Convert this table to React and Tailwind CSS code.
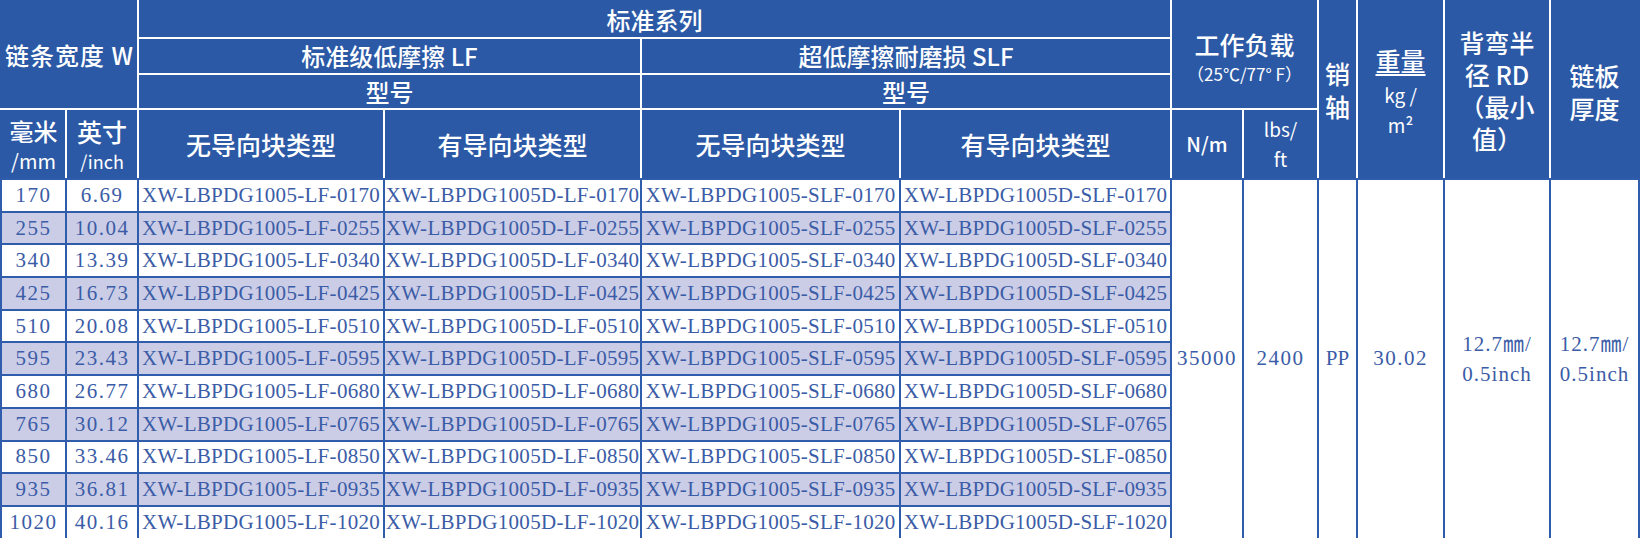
const widths = [
  ["170", "6.69"],
  ["255", "10.04"],
  ["340", "13.39"],
  ["425", "16.73"],
  ["510", "20.08"],
  ["595", "23.43"],
  ["680", "26.77"],
  ["765", "30.12"],
  ["850", "33.46"],
  ["935", "36.81"],
  ["1020", "40.16"],
];

const code = (mm) => mm.padStart(4, "0");

const head = "bg-[#2b59a6] text-white border-2 border-white text-center align-middle font-medium p-0";
const body = "border-2 border-[#2f5cab] text-center align-middle p-0 whitespace-nowrap";

const App = () => {
  return (
    <div className="w-[1641px] h-[538px] bg-white overflow-hidden">
      <table
        className="table-fixed border-collapse w-[1638px] text-[#3b5ca6]"
        style={{ fontFamily: '"Noto Sans CJK SC", sans-serif' }}
      >
        <colgroup>
          <col className="w-[65px]" />
          <col className="w-[72px]" />
          <col className="w-[246px]" />
          <col className="w-[257px]" />
          <col className="w-[259px]" />
          <col className="w-[271px]" />
          <col className="w-[72px]" />
          <col className="w-[75px]" />
          <col className="w-[39px]" />
          <col className="w-[87px]" />
          <col className="w-[106px]" />
          <col className="w-[89px]" />
        </colgroup>
        <thead className="text-[24px] leading-none">
          <tr className="h-[37px]">
            <th colSpan={2} rowSpan={3} className={`${head} border-t-[#2b59a6] border-l-[#2b59a6] tracking-[1px]`}>
              链条宽度 W
            </th>
            <th colSpan={4} className={`${head} border-t-[#2b59a6]`}>标准系列</th>
            <th colSpan={2} rowSpan={3} className={`${head} border-t-[#2b59a6]`}>
              <div className="flex flex-col items-center gap-2 pt-1">
                <span className="text-[25px]">工作负载</span>
                <span className="text-[17px] font-normal">（25℃/77° F）</span>
              </div>
            </th>
            <th rowSpan={4} className={`${head} border-t-[#2b59a6] border-b-[#2f5cab] text-[25px] leading-[33px]`}>
              销<br />轴
            </th>
            <th rowSpan={4} className={`${head} border-t-[#2b59a6] border-b-[#2f5cab]`}>
              <div className="flex flex-col items-center">
                <span className="text-[25px] leading-[36px] underline underline-offset-[3px] decoration-2">重量</span>
                <span className="text-[19px] leading-[34px] font-normal">kg /</span>
                <span className="text-[19px] leading-[26px] font-normal">m²</span>
              </div>
            </th>
            <th rowSpan={4} className={`${head} border-t-[#2b59a6] border-b-[#2f5cab] text-[25px] leading-[32px]`}>
              背弯半<br />径 RD<br />（最小<br />值）
            </th>
            <th rowSpan={4} className={`${head} border-t-[#2b59a6] border-b-[#2f5cab] border-r-[#2b59a6] text-[25px] leading-[33px]`}>
              <div className="flex flex-col items-center pt-1">
                <span>链板</span>
                <span>厚度</span>
              </div>
            </th>
          </tr>
          <tr className="h-[36px]">
            <th colSpan={2} className={head}>标准级低摩擦 LF</th>
            <th colSpan={2} className={head}>超低摩擦耐磨损 SLF</th>
          </tr>
          <tr className="h-[35px]">
            <th colSpan={2} className={head}>型号</th>
            <th colSpan={2} className={head}>型号</th>
          </tr>
          <tr className="h-[70px]">
            <th className={`${head} border-l-[#2b59a6] border-b-[#2f5cab]`}>
              <div className="flex flex-col items-center">
                <span className="text-[24px] leading-[34px]">毫米</span>
                <span className="text-[20px] leading-[26px] font-normal">/mm</span>
              </div>
            </th>
            <th className={`${head} border-b-[#2f5cab]`}>
              <div className="flex flex-col items-center">
                <span className="text-[25px] leading-[34px]">英寸</span>
                <span className="text-[18px] leading-[26px] font-normal">/inch</span>
              </div>
            </th>
            <th className={`${head} border-b-[#2f5cab] text-[25px]`}>无导向块类型</th>
            <th className={`${head} border-b-[#2f5cab] text-[25px]`}>有导向块类型</th>
            <th className={`${head} border-b-[#2f5cab] text-[25px]`}>无导向块类型</th>
            <th className={`${head} border-b-[#2f5cab] text-[25px]`}>有导向块类型</th>
            <th className={`${head} border-b-[#2f5cab] text-[20px]`}>N/m</th>
            <th className={`${head} border-b-[#2f5cab] text-[19px] leading-[30px] font-normal`}>
              lbs/<br />ft
            </th>
          </tr>
        </thead>
        <tbody
          className="text-[21px] leading-none"
          style={{ fontFamily: '"Liberation Serif", "Noto Sans CJK SC", serif' }}
        >
          {widths.map(([mm, inch], i) => {
            const stripe = i % 2 === 1 ? "bg-[#cbcde6]" : "bg-white";
            const c = code(mm);
            return (
              <tr key={mm} className="h-[32.7px]">
                <td className={`${body} ${stripe} border-l-[#2f5cab] tracking-[1.5px]`}>{mm}</td>
                <td className={`${body} ${stripe} tracking-[1.5px]`}>{inch}</td>
                <td className={`${body} ${stripe} tracking-[0.3px]`}>XW-LBPDG1005-LF-{c}</td>
                <td className={`${body} ${stripe} tracking-[0.3px]`}>XW-LBPDG1005D-LF-{c}</td>
                <td className={`${body} ${stripe} tracking-[0.3px]`}>XW-LBPDG1005-SLF-{c}</td>
                <td className={`${body} ${stripe} tracking-[0.2px]`}>XW-LBPDG1005D-SLF-{c}</td>
                {i === 0 && (
                  <>
                    <td rowSpan={11} className={`${body} bg-white tracking-[1.5px]`}>35000</td>
                    <td rowSpan={11} className={`${body} bg-white tracking-[1.5px]`}>2400</td>
                    <td rowSpan={11} className={`${body} bg-white`}>PP</td>
                    <td rowSpan={11} className={`${body} bg-white tracking-[1.5px]`}>30.02</td>
                    <td rowSpan={11} className={`${body} bg-white leading-[30px] tracking-[1px]`}>
                      12.7㎜/<br />0.5inch
                    </td>
                    <td rowSpan={11} className={`${body} bg-white leading-[30px] tracking-[1px]`}>
                      12.7㎜/<br />0.5inch
                    </td>
                  </>
                )}
              </tr>
            );
          })}
        </tbody>
      </table>
    </div>
  );
};

export default App;
